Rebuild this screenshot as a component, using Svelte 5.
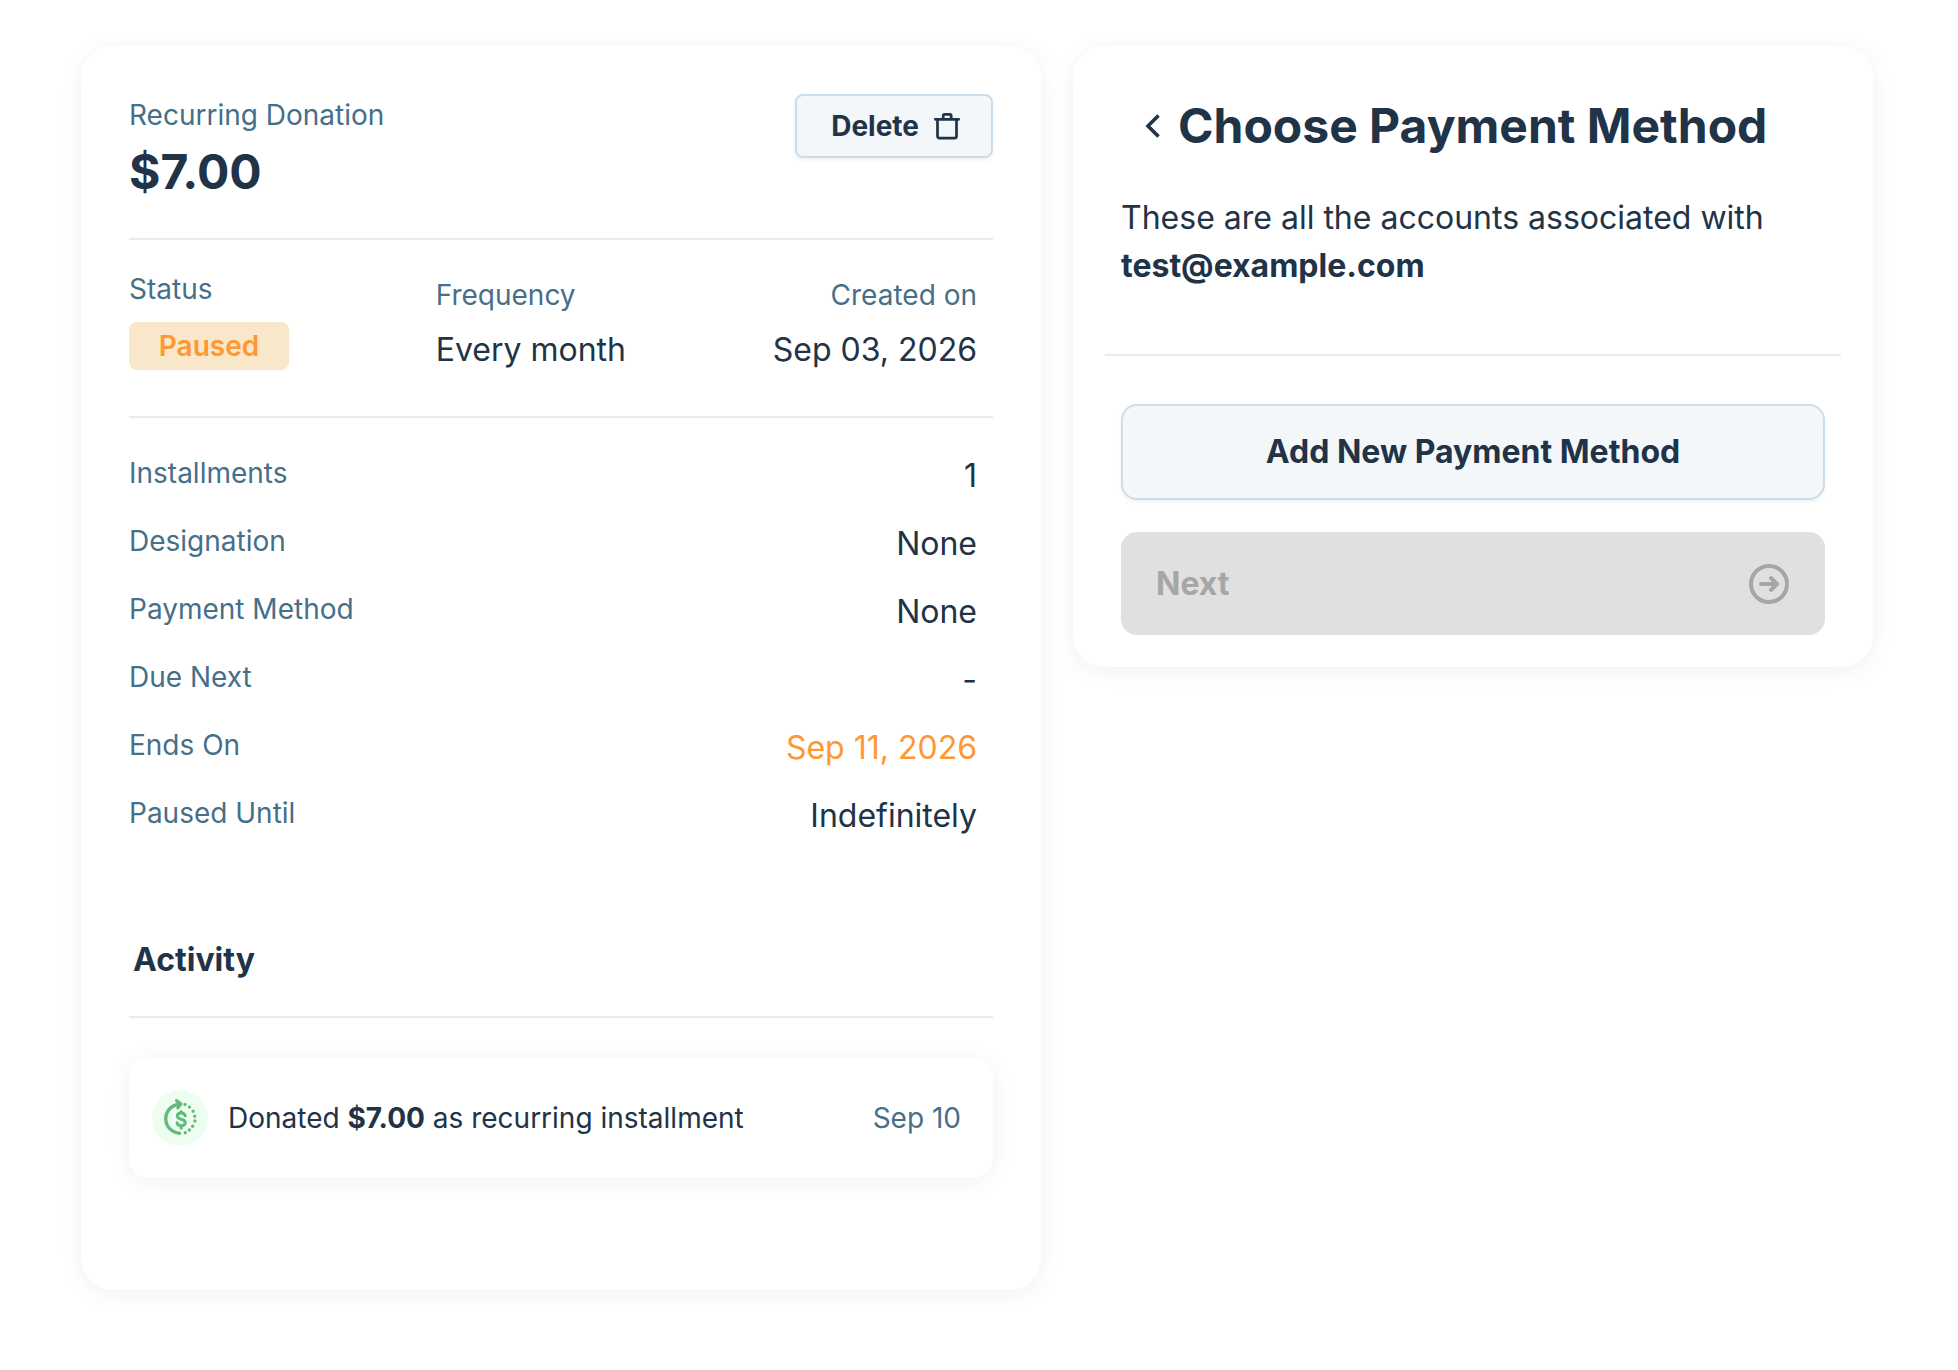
<script>
let details = [
    { label: 'Installments', value: '1' },
    { label: 'Designation', value: 'None' },
    { label: 'Payment Method', value: 'None' },
    { label: 'Due Next', value: '-' },
    { label: 'Ends On', value: 'Sep 11, 2026', highlight: true },
    { label: 'Paused Until', value: 'Indefinitely' }
]

let email = 'test@example.com'
let canContinue = false
</script>

<style>
:global(body) {
    background: #fff;
}

main {
    display: grid;
    grid-template-columns: 6fr 5fr;
    align-items: start;
    gap: 32px;
    padding: 46px 85px 80px 81px;
    color: #213346;
    font-family: Inter, "Liberation Sans", sans-serif;
    font-size: 32px;
    line-height: 48px;
    font-optical-sizing: none;
}

h2, h3, p, dl, dd, dt, ul {
    margin: 0;
    padding: 0;
}

button {
    font: inherit;
    font-weight: 700;
    color: inherit;
    cursor: pointer;
}

.card {
    border-radius: 32px;
    background: #fff;
    box-shadow: 0 4px 24px rgba(0, 0, 0, 0.06);
}

.donation {
    padding: 48px 48px 112px;
}

.label {
    color: #466f8a;
    font-size: 28px;
    line-height: 42px;
}

.summary {
    display: flex;
    justify-content: space-between;
    align-items: flex-start;
    padding-bottom: 30px;
    border-bottom: 2px solid #e2edf6;
}

.amount {
    font-size: 48px;
    line-height: 72px;
    font-weight: 700;
}

.secondary {
    border: 2px solid #c9deea;
    background: #f3f7fa;
    box-shadow: 0 2px 4px rgba(0, 0, 0, 0.06);
}

.delete {
    display: flex;
    align-items: center;
    gap: 14px;
    height: 64px;
    padding: 0 30px 0 34px;
    border-radius: 8px;
    font-size: 28px;
}

.facts {
    display: flex;
    justify-content: space-between;
    padding: 28px 16px 42px 0;
    border-bottom: 2px solid #e2edf6;
}

.fact {
    display: flex;
    flex-direction: column;
    gap: 10px;
    padding-top: 6px;
}

.fact.status {
    gap: 12px;
    padding-top: 0;
}

.fact.created {
    text-align: right;
}

.badge {
    width: 160px;
    height: 48px;
    border-radius: 8px;
    background: #f8e7c9;
    color: #ff9833;
    font-size: 28px;
    font-weight: 600;
    text-align: center;
}

.details {
    display: flex;
    flex-direction: column;
    gap: 20px;
    padding: 34px 16px 0 0;
}

.row {
    display: flex;
    justify-content: space-between;
    align-items: flex-start;
}

.row.highlight dd {
    color: #ff9833;
}

.activity h3 {
    padding: 96px 4px 32px;
    border-bottom: 2px solid #e2edf6;
    font-size: 32px;
}

.activity ul {
    padding-top: 40px;
    list-style: none;
}

.activity li {
    display: flex;
    align-items: center;
    gap: 20px;
    padding: 32px 32px 32px 23px;
    border-radius: 20px;
    box-shadow: 0 4px 24px rgba(0, 0, 0, 0.06);
    font-size: 28px;
}

.activity li p {
    flex: 1;
}

.bubble {
    display: flex;
    width: 56px;
    height: 56px;
    border-radius: 50%;
    background: #edfef1;
}

.payment {
    padding: 48px 32px 32px;
}

.title {
    display: flex;
    align-items: center;
    gap: 14px;
    padding: 0 35px;
}

.back {
    display: flex;
    padding: 0;
    border: none;
    background: none;
}

h2 {
    font-size: 48px;
    line-height: 64px;
}

.intro {
    padding: 36px 16px 64px;
    border-bottom: 2px solid #e2edf6;
}

.actions {
    display: flex;
    flex-direction: column;
    gap: 32px;
    padding: 48px 16px 0;
}

.add {
    height: 96px;
    border-radius: 16px;
}

.next {
    display: flex;
    justify-content: space-between;
    align-items: center;
    height: 103px;
    padding: 0 35px;
    border: none;
    border-radius: 16px;
}

.next:disabled {
    background: #e0e0e0;
    color: #a6a6a6;
    cursor: default;
}
</style>

<main>
    <section class="card donation">
        <div class="summary">
            <div>
                <p class="label">Recurring Donation</p>
                <p class="amount">$7.00</p>
            </div>
            <button class="secondary delete">
                Delete
                <svg width="28" height="28" viewBox="0 0 28 28" fill="none" stroke="currentColor" stroke-width="2.7" stroke-linejoin="round" stroke-linecap="round" aria-hidden="true">
                    <path d="M2.300 7.300h23.400M4.500 7.300v17a1.800 1.800 0 0 0 1.800 1.800h15.400a1.800 1.800 0 0 0 1.800-1.800v-17M10.200 7.300v-3.500a1.500 1.500 0 0 1 1.500-1.500h5a1.500 1.500 0 0 1 1.500 1.500v3.500" />
                </svg>
            </button>
        </div>

        <div class="facts">
            <div class="fact status">
                <span class="label">Status</span>
                <span class="badge">Paused</span>
            </div>
            <div class="fact">
                <span class="label">Frequency</span>
                <span>Every month</span>
            </div>
            <div class="fact created">
                <span class="label">Created on</span>
                <span>Sep 03, 2026</span>
            </div>
        </div>

        <dl class="details">
            {#each details as detail}
                <div class="row" class:highlight={detail.highlight}>
                    <dt class="label">{detail.label}</dt>
                    <dd>{detail.value}</dd>
                </div>
            {/each}
        </dl>

        <div class="activity">
            <h3>Activity</h3>
            <ul>
                <li>
                    <span class="bubble">
                        <svg width="56" height="56" viewBox="0 0 56 56" fill="none" stroke="#63bb7b" stroke-width="3.400" stroke-linecap="round" stroke-linejoin="round" aria-hidden="true">
                            <path d="M27.500 43.200A14.520 14.520 0 0 1 27.500 14.200" />
                            <path d="M24.600 10.800l4.200 3.100-2.900 3.900" />
                            <path d="M33 14.500h.01M37.500 17.100h.01M41.100 21.300h.01M42.700 26.200h.01M42.900 31h.01M40.700 36.300h.01M37.300 40h.01M33.200 42.700h.01" />
                            <path stroke-width="3" d="M33.200 25.800c-.5-1.900-2-2.800-4-2.800-2.300 0-3.900 1-3.900 3 0 4.400 7.900 2.100 7.900 6.500 0 2.100-1.600 3.300-4 3.300-2.300 0-3.800-1.100-4.100-3.100M29.200 21.500v1.500M29.200 36v2.200" />
                        </svg>
                    </span>
                    <p>Donated <strong>$7.00</strong> as recurring installment</p>
                    <time class="label" datetime="2026-09-10">Sep 10</time>
                </li>
            </ul>
        </div>
    </section>

    <section class="card payment">
        <div class="title">
            <button class="back" aria-label="Back">
                <svg width="24" height="32" viewBox="0 0 24 32" fill="none" stroke="currentColor" stroke-width="3.600" aria-hidden="true">
                    <path d="M18.500 5.500L8 16L18.500 26.500" />
                </svg>
            </button>
            <h2>Choose Payment Method</h2>
        </div>
        <p class="intro">These are all the accounts associated with <strong>{email}</strong></p>
        <div class="actions">
            <button class="secondary add">Add New Payment Method</button>
            <button class="next" disabled={!canContinue}>
                Next
                <svg width="42" height="42" viewBox="0 0 42 42" fill="none" stroke="currentColor" stroke-width="4" stroke-linecap="round" stroke-linejoin="round" aria-hidden="true">
                    <circle cx="21" cy="21" r="18" />
                    <path d="M13 21h16M23 15l6 6-6 6" />
                </svg>
            </button>
        </div>
    </section>
</main>
